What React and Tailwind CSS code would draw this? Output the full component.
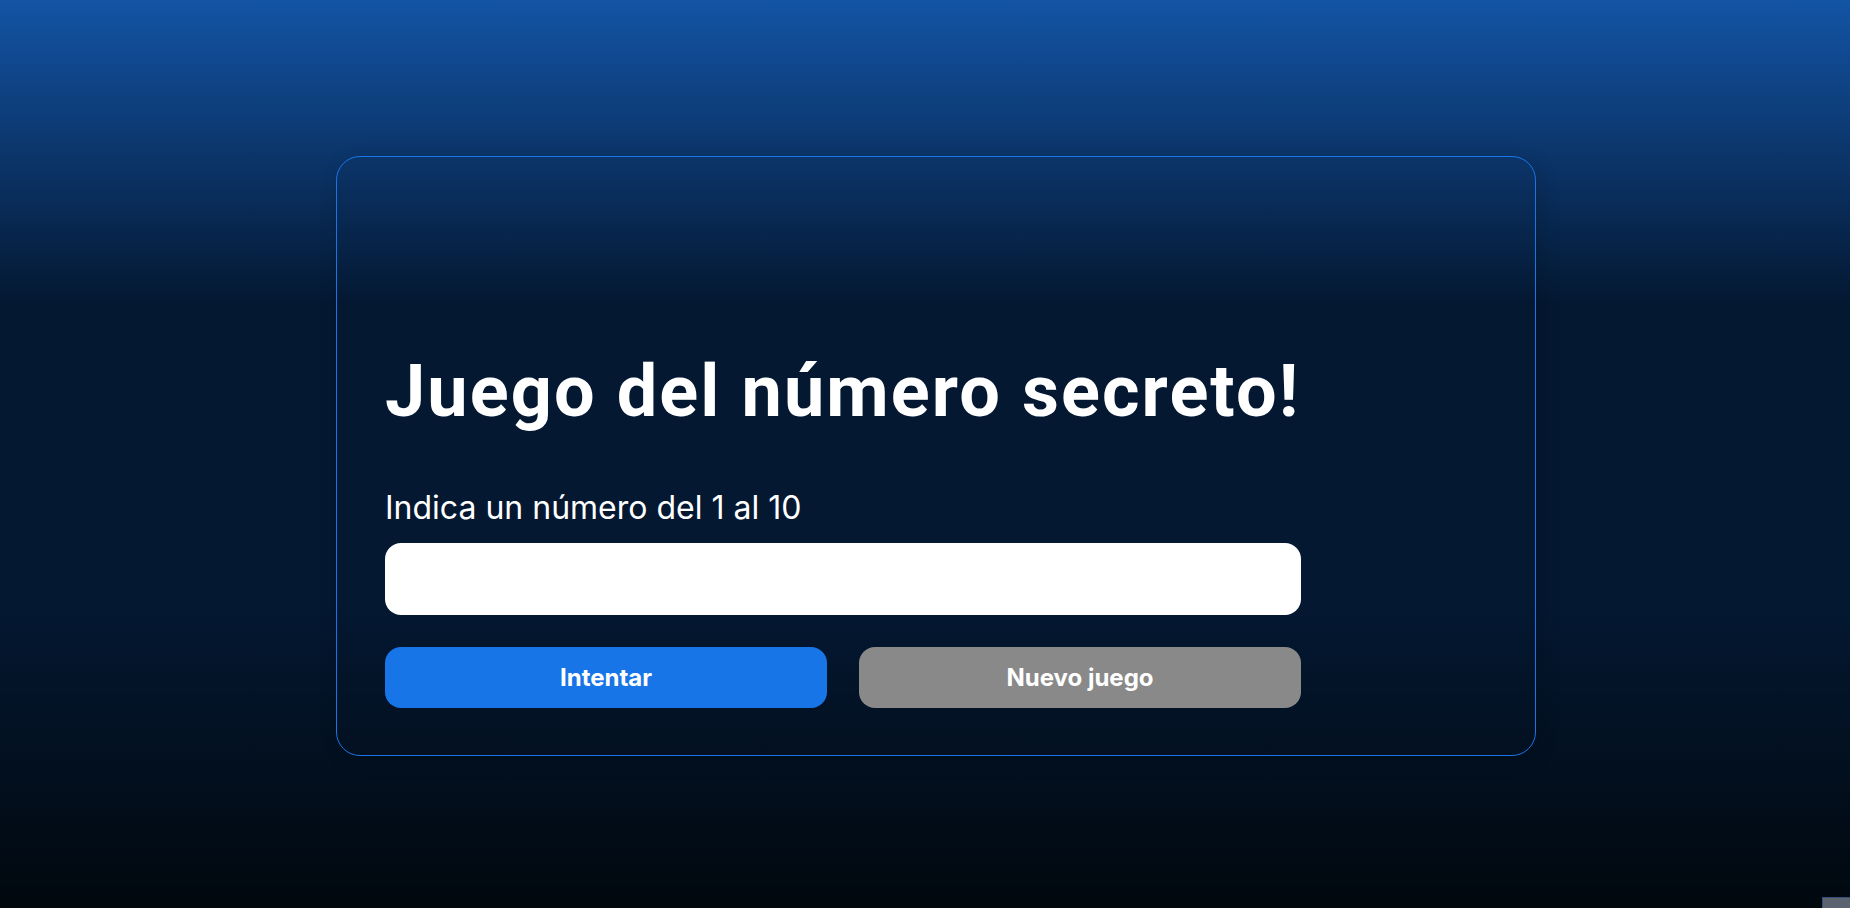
export default function App() {
  return (
    <div className="relative min-h-screen w-full overflow-hidden bg-[linear-gradient(#1354A5_0%,#041832_33.33%,#041832_66.67%,#01080E_100%)] flex items-center justify-center pl-[22px] pt-1">
      <div className="w-[1200px] h-[600px] rounded-3xl border border-[#1875E8] shadow-[4px_4px_20px_0px_rgba(1,8,14,0.15)] flex flex-col justify-end pl-12 pb-[47px]">
        <div className="w-[916px] flex flex-col">
          <h1
            className="text-white text-[72px] leading-[72px] font-bold tracking-[2.1px] whitespace-nowrap mb-[60px]"
            style={{ fontFamily: "Roboto, 'Liberation Sans', sans-serif" }}
          >
            Juego del número secreto!
          </h1>
          <p
            className="text-white text-[32px] font-normal leading-[39px] mb-4"
            style={{ fontFamily: "Inter, 'Liberation Sans', sans-serif" }}
          >
            Indica un número del 1 al 10
          </p>
          <input
            type="number"
            className="w-full h-[72px] rounded-2xl bg-white border-0 outline-none text-[#1875E8] px-8 text-2xl"
            style={{ fontFamily: "Inter, 'Liberation Sans', sans-serif" }}
          />
          <div className="flex gap-8 mt-8">
            <button
              className="flex-1 rounded-2xl bg-[#1875E8] py-4 px-6 text-2xl leading-[29px] font-bold text-white"
              style={{ fontFamily: "Inter, 'Liberation Sans', sans-serif" }}
            >
              Intentar
            </button>
            <button
              disabled
              className="flex-1 rounded-2xl bg-[#898989] py-4 px-6 text-2xl leading-[29px] font-bold text-white"
              style={{ fontFamily: "Inter, 'Liberation Sans', sans-serif" }}
            >
              Nuevo juego
            </button>
          </div>
        </div>
      </div>
      <div className="absolute left-[1822px] top-[897px] w-[40px] h-[20px] bg-[#5b6270] border border-[#34507a]"></div>
    </div>
  );
}
